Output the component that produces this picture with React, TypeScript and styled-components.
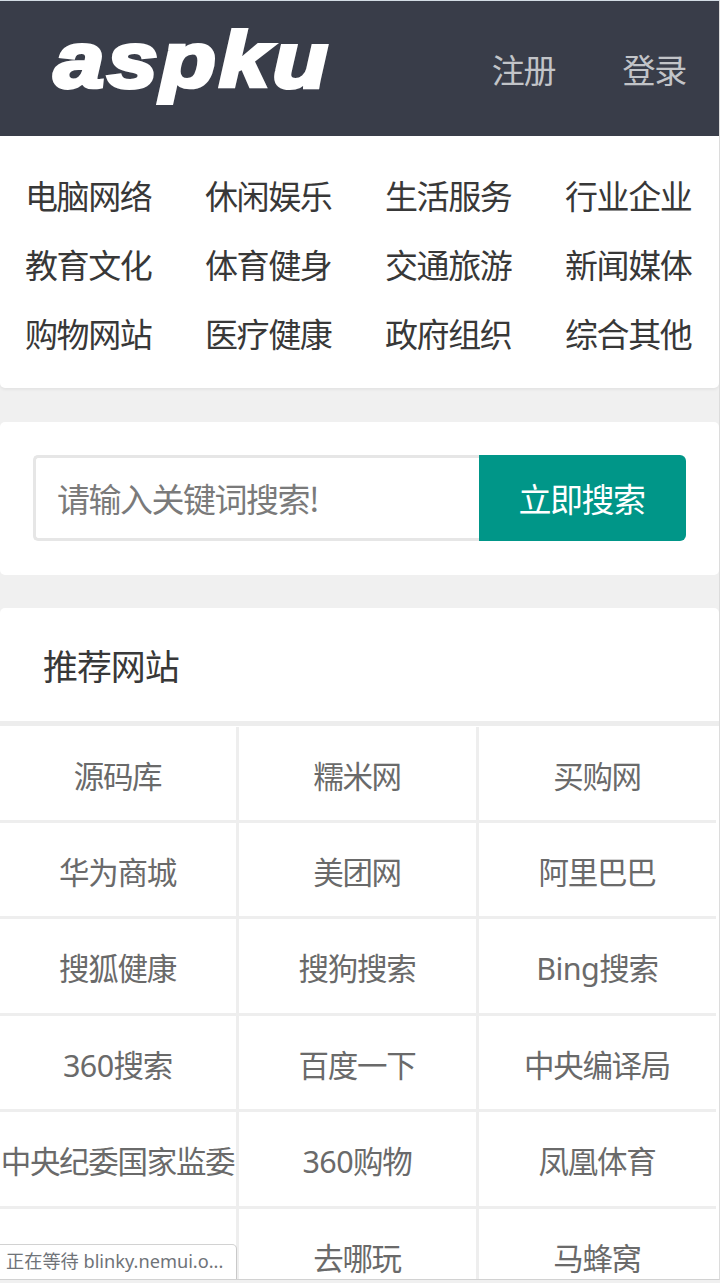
import React from "react";
import styled, { createGlobalStyle } from "styled-components";

const Global = createGlobalStyle`
  * { box-sizing: border-box; }
  html, body { margin: 0; padding: 0; background: #f0f0f0; overflow: hidden; }
  body, input, button { font-family: "Noto Sans", "Noto Sans CJK SC", sans-serif; }
`;

const Page = styled.div`
  position: relative;
  width: 720px;
  height: 1280px;
  overflow: hidden;
  background: #f0f0f0;
  border-top: 1px solid #d3dce4;
  border-right: 1px solid #dcdcdc;
  border-bottom: 1px solid #d2d2d2;
`;

const Header = styled.header`
  display: flex;
  align-items: flex-start;
  justify-content: space-between;
  height: 135px;
  padding-right: 33px;
  background: #393d49;
`;

const Logo = styled.svg`
  display: block;
  width: 360px;
  height: 135px;
`;

const LogoText = styled.text`
  font-family: "Liberation Sans", Arial, sans-serif;
  font-weight: 700;
  font-style: italic;
  font-size: 77px;
  letter-spacing: 3px;
  fill: #fff;
  stroke: #fff;
  stroke-width: 4px;
`;

const Account = styled.nav`
  display: flex;
  gap: 67px;
  padding-top: 44px;
`;

const AccountLink = styled.a`
  font: 33px/48px "Noto Sans CJK SC", sans-serif;
  letter-spacing: -1.2px;
  color: #c2c4c8;
`;

const Card = styled.section`
  background: #fff;
  border-radius: 5px;
`;

const Categories = styled(Card)`
  display: grid;
  grid-template-columns: repeat(4, 180px);
  grid-auto-rows: 69px;
  height: 252px;
  padding-top: 25px;
  border-radius: 0 0 5px 5px;
  box-shadow: 0 2px 3px rgba(0, 0, 0, 0.05);
`;

const Category = styled.a`
  padding-left: 25px;
  font: 33px/69px "Noto Sans CJK SC", sans-serif;
  letter-spacing: -1.4px;
  white-space: nowrap;
  color: #383838;
`;

const SearchCard = styled(Card)`
  display: flex;
  height: 153px;
  margin-top: 34px;
  padding: 33px 33px 34px;
`;

const SearchInput = styled.input`
  width: 446px;
  height: 86px;
  padding: 0 21px;
  border: 3px solid #e6e6e6;
  border-right: 0;
  border-radius: 5px 0 0 5px;
  outline: 0;
  background: #fff;
  font: 33px/48px "Noto Sans CJK SC", sans-serif;
  letter-spacing: -1.5px;
  &::placeholder { color: #7a7a7a; opacity: 1; }
`;

const SearchButton = styled.button`
  width: 207px;
  height: 86px;
  padding: 0 2px 0 0;
  border: 0;
  border-radius: 0 6px 6px 0;
  background: #009688;
  color: #fff;
  font: 33px/48px "Noto Sans CJK SC", sans-serif;
  letter-spacing: -1.5px;
`;

const Sites = styled(Card)`
  height: 700px;
  margin-top: 33px;
`;

const SitesTitle = styled.h2`
  height: 118px;
  margin: 0;
  padding-left: 43px;
  border-bottom: 5px solid #ededed;
  font: 400 35px/113px "Noto Sans CJK SC", sans-serif;
  letter-spacing: -1.1px;
  color: #383838;
`;

const SiteGrid = styled.div`
  display: grid;
  grid-template-columns: 239px 240px 237px;
  grid-auto-rows: 96.4px;
  padding-top: 0.6px;
`;

const Site = styled.a<{ $last: boolean }>`
  padding-right: 1px;
  border-right: ${(p) => (p.$last ? "0" : "3px solid #eee")};
  border-bottom: 3px solid #eee;
  font: 30.5px/98px "Noto Sans", "Noto Sans CJK SC", sans-serif;
  letter-spacing: -1.3px;
  text-align: center;
  white-space: nowrap;
  color: #6a6a6a;
`;

const Latin = styled.span`
  letter-spacing: -0.6px;
`;

const Status = styled.div`
  position: absolute;
  left: 0;
  bottom: 0;
  width: 237px;
  height: 35px;
  padding-left: 6px;
  border-top: 1px solid #d2d2d2;
  border-right: 1px solid #c9c9c9;
  border-radius: 0 5px 0 0;
  background: #fff;
  font: 18.2px/33px "Noto Sans", "Noto Sans CJK SC", sans-serif;
  white-space: nowrap;
  color: #6f7378;
`;

const categories = [
  "电脑网络", "休闲娱乐", "生活服务", "行业企业",
  "教育文化", "体育健身", "交通旅游", "新闻媒体",
  "购物网站", "医疗健康", "政府组织", "综合其他",
];

const sites: { latin?: string; name: string }[] = [
  { name: "源码库" }, { name: "糯米网" }, { name: "买购网" },
  { name: "华为商城" }, { name: "美团网" }, { name: "阿里巴巴" },
  { name: "搜狐健康" }, { name: "搜狗搜索" }, { latin: "Bing", name: "搜索" },
  { latin: "360", name: "搜索" }, { name: "百度一下" }, { name: "中央编译局" },
  { name: "中央纪委国家监委" }, { latin: "360", name: "购物" }, { name: "凤凰体育" },
  { name: "" }, { name: "去哪玩" }, { name: "马蜂窝" },
];

export default function App() {
  return (
    <>
      <Global />
      <Page>
        <Header>
          <Logo viewBox="0 0 360 135">
            <LogoText x="54" y="86" textLength="277" lengthAdjust="spacingAndGlyphs">aspku</LogoText>
          </Logo>
          <Account>
            <AccountLink>注册</AccountLink>
            <AccountLink>登录</AccountLink>
          </Account>
        </Header>
        <Categories>
          {categories.map((name) => <Category key={name}>{name}</Category>)}
        </Categories>
        <SearchCard>
          <SearchInput placeholder="请输入关键词搜索!" />
          <SearchButton>立即搜索</SearchButton>
        </SearchCard>
        <Sites>
          <SitesTitle>推荐网站</SitesTitle>
          <SiteGrid>
            {sites.map((site, i) => (
              <Site key={i} $last={i % 3 === 2}>
                {site.latin && <Latin>{site.latin}</Latin>}
                {site.name}
              </Site>
            ))}
          </SiteGrid>
        </Sites>
        <Status>正在等待 blinky.nemui.o...</Status>
      </Page>
    </>
  );
}
